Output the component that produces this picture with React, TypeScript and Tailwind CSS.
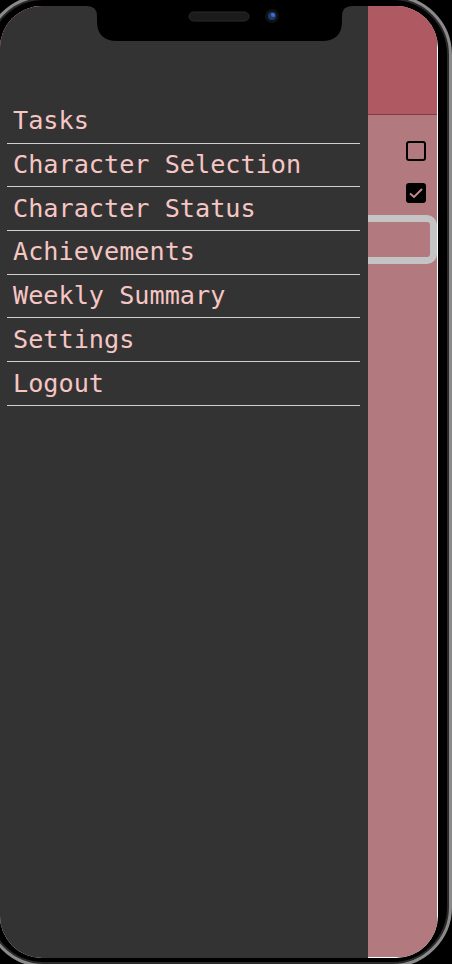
import React from "react";

const items = [
  "Tasks",
  "Character Selection",
  "Character Status",
  "Achievements",
  "Weekly Summary",
  "Settings",
  "Logout",
];

export default function App() {
  return (
    <div className="relative w-[452px] h-[964px] bg-black overflow-hidden">
      {/* phone bevel */}
      <div className="absolute left-[-16px] top-[-5px] right-0 bottom-[-3px] rounded-[60px] border-[4px] border-[#8a8a8a] pointer-events-none" />
      <div className="absolute left-[-13px] top-[-2px] right-[3px] bottom-0 rounded-[57px] border-[2px] border-[#2a2a2a] pointer-events-none" />

      {/* screen */}
      <div className="relative mt-[6px] w-[438px] h-[952px] rounded-[42px] bg-white overflow-hidden">
        <div className="w-[437px] h-[951px] bg-[#b27a7e] flex flex-col">
          <div className="h-[109px] bg-[#af5a62] border-b border-[#7e3c44]" />
          <div className="flex flex-col items-end pr-[11px] pt-[26px] gap-[22px]">
            <div className="w-[20px] h-[20px] rounded-[3px] border-2 border-black" />
            <div className="w-[20px] h-[20px] rounded-[3px] bg-black flex items-center justify-center">
              <svg width="20" height="20" viewBox="0 0 20 20">
                <path d="M4 10.5 L8 14 L16 6" fill="none" stroke="#c08a8e" strokeWidth="2" />
              </svg>
            </div>
          </div>
          <div className="ml-[200px] mt-[12px] h-[49px] rounded-[10px] border-[7px] border-[#c4c4c4]" />
        </div>

        {/* drawer */}
        <div className="absolute left-0 top-0 bottom-0 w-[368px] bg-[#333333] pt-[94px]">
          <ul className="mx-[7px] w-[353px] font-['DejaVu_Sans_Mono',monospace] text-[25.2px] text-[#f6c6c4]">
            {items.map((t) => (
              <li key={t} className="px-[6px] py-[6.4px] leading-[29.9px] border-b border-[#cfcfcf] whitespace-nowrap">
                {t}
              </li>
            ))}
          </ul>
        </div>

        {/* notch */}
        <svg className="absolute left-0 top-0" width="438" height="40" viewBox="0 0 438 40">
          <path
            d="M87 0 Q97 0 97 10 L97 15 Q97 35 117 35 L322 35 Q342 35 342 15 L342 10 Q342 0 352 0 Z"
            fill="#000"
          />
          <rect x="189" y="6" width="60" height="9" rx="4.5" fill="#1b1b1b" stroke="#2a2a2a" strokeWidth="1" />
          <circle cx="272" cy="10" r="7" fill="#111" />
          <circle cx="272" cy="10" r="4" fill="#1e3a6e" />
          <circle cx="273" cy="9" r="2" fill="#3f6fc0" />
        </svg>
      </div>
    </div>
  );
}
